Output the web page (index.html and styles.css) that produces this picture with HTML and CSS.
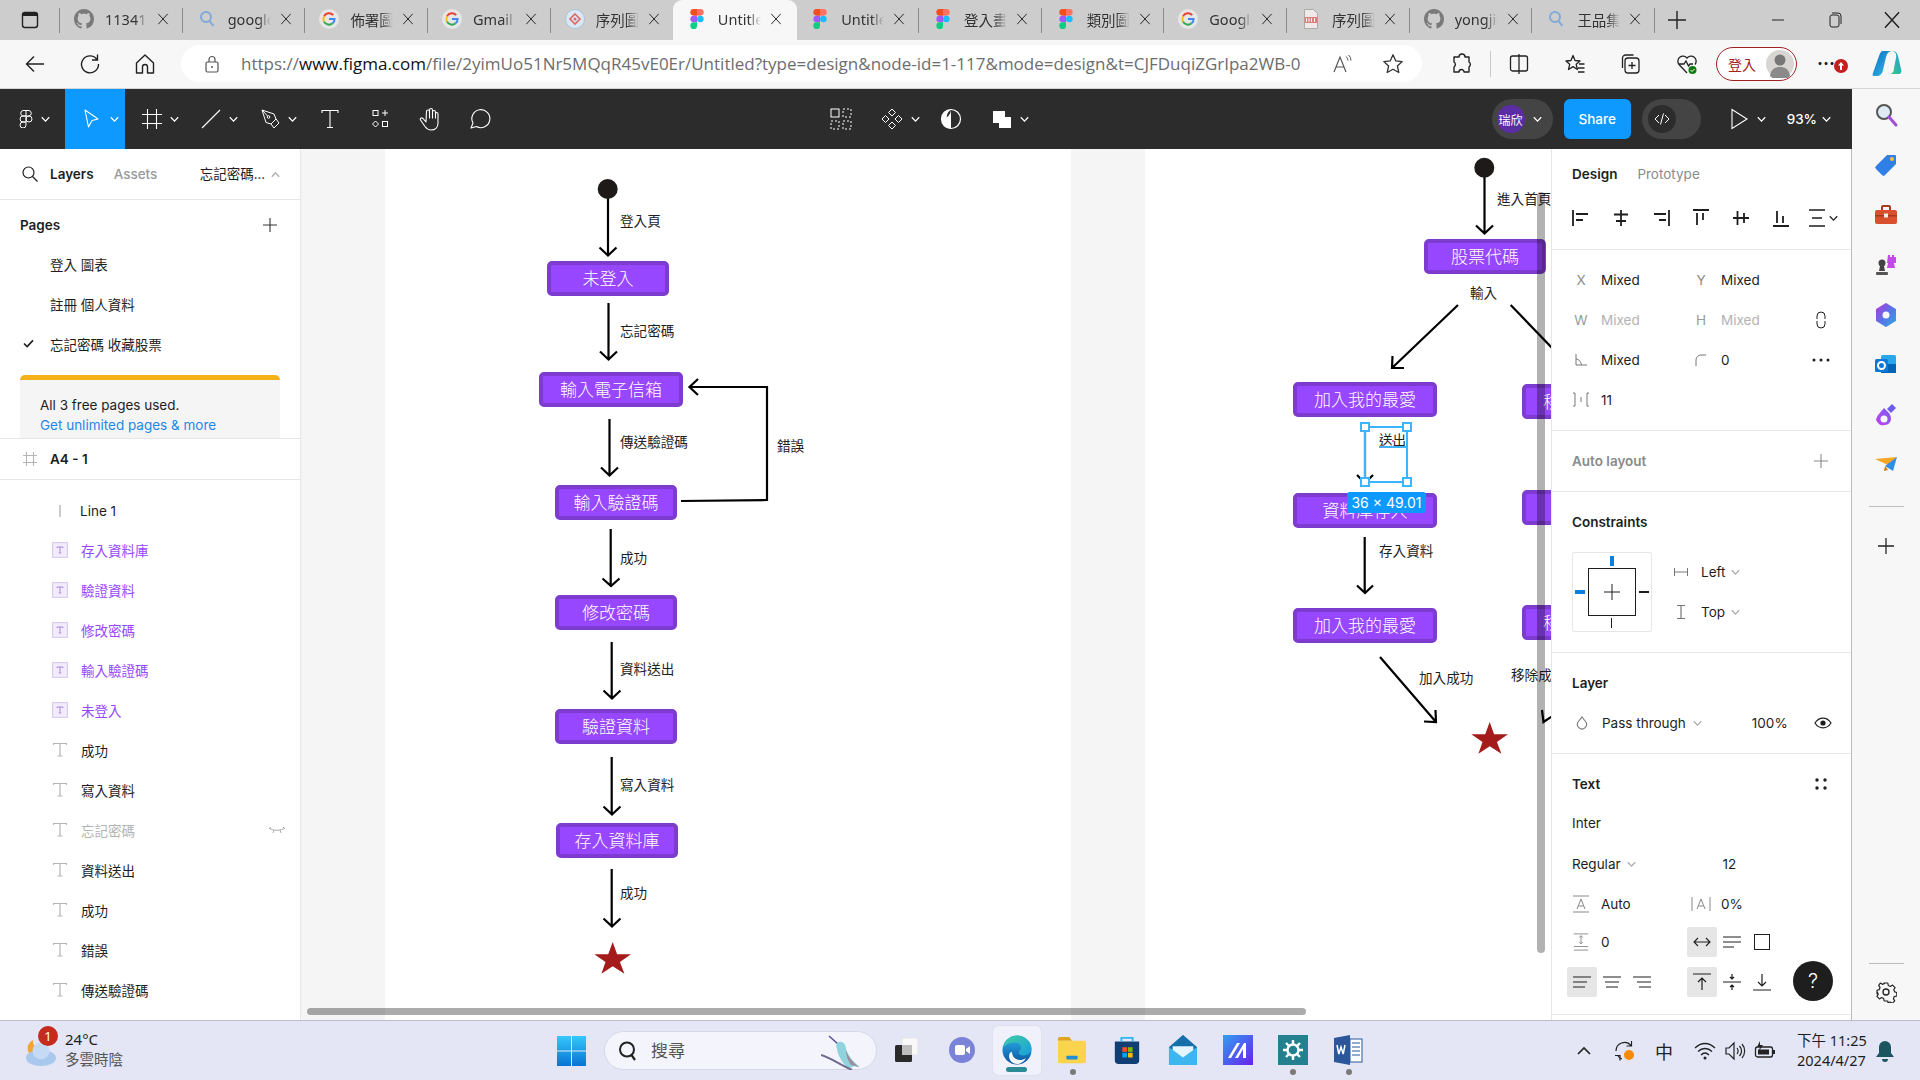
FILE: index.html
```html
<!DOCTYPE html>
<html lang="zh-Hant">
<head>
<meta charset="utf-8">
<title>Figma</title>
<link rel="stylesheet" href="styles.css">
</head>
<body>
<svg class="defs" aria-hidden="true">
  <symbol id="fig" viewBox="0 0 12 18"><path d="M3 0h3v6H3a3 3 0 010-6z" fill="#f24e1e"/><path d="M6 0h3a3 3 0 010 6H6z" fill="#ff7262"/><path d="M0 9a3 3 0 013-3h3v6H3a3 3 0 01-3-3z" fill="#a259ff"/><circle cx="9" cy="9" r="3" fill="#1abcfe"/><path d="M3 12h3v3a3 3 0 11-3-3z" fill="#0acf83"/></symbol>
  <symbol id="goog" viewBox="0 0 20 20"><circle cx="10" cy="10" r="10" fill="#e6e6e6"/><path d="M14.2 6.2A5.6 5.6 0 005 7.4" fill="none" stroke="#ea4335" stroke-width="2"/><path d="M5 7.4a5.6 5.6 0 000 5.2" fill="none" stroke="#fbbc05" stroke-width="2"/><path d="M5 12.6a5.6 5.6 0 008.6 1.7" fill="none" stroke="#34a853" stroke-width="2"/><path d="M13.6 14.3a5.4 5.4 0 002-4.4H10" fill="none" stroke="#4285f4" stroke-width="2"/></symbol>
  <symbol id="gh" viewBox="0 0 16 16"><path fill="#7a7a7a" d="M8 0C3.58 0 0 3.58 0 8c0 3.54 2.29 6.53 5.47 7.59.4.07.55-.17.55-.38 0-.19-.01-.82-.01-1.49-2.01.37-2.53-.49-2.69-.94-.09-.23-.48-.94-.82-1.13-.28-.15-.68-.52-.01-.53.63-.01 1.08.58 1.23.82.72 1.21 1.87.87 2.33.66.07-.52.28-.87.51-1.07-1.78-.2-3.64-.89-3.64-3.95 0-.87.31-1.59.82-2.15-.08-.2-.36-1.02.08-2.12 0 0 .67-.21 2.2.82.64-.18 1.32-.27 2-.27s1.36.09 2 .27c1.53-1.04 2.2-.82 2.2-.82.44 1.1.16 1.92.08 2.12.51.56.82 1.27.82 2.15 0 3.07-1.87 3.75-3.65 3.95.29.25.54.73.54 1.48 0 1.07-.01 1.93-.01 2.2 0 .21.15.46.55.38A8.01 8.01 0 0016 8c0-4.42-3.58-8-8-8z"/></symbol>
  <symbol id="mag" viewBox="0 0 20 20"><circle cx="9" cy="8" r="5" fill="none" stroke="#7fa9d8" stroke-width="2"/><path d="M12.5 12l4 5" stroke="#7fa9d8" stroke-width="2"/></symbol>
  <symbol id="seq" viewBox="0 0 20 20"><circle cx="10" cy="10" r="9.5" fill="#dbe7f2" stroke="#a9c3da"/><path d="M10 5l5 5-5 5-5-5z" fill="none" stroke="#d66" stroke-width="1.6"/><circle cx="10" cy="10" r="1.5" fill="#d66"/></symbol>
  <symbol id="pdf" viewBox="0 0 20 20"><path d="M3.5.5h9l4 4v15h-13z" fill="#efe9e9" stroke="#aaa"/><rect x="3.5" y="8" width="13" height="6" fill="#dc7f7f"/><path d="M5.5 9.2v3.6M8 9.2v3.6M10.5 9.2v3.6M13.5 9.2v3.6" stroke="#fff"/></symbol>
  <symbol id="x" viewBox="0 0 14 14"><path d="M1.5 1l11 12M12.5 1l-11 12" fill="none" stroke="#1e1e1e" stroke-width="1.1"/></symbol>
  <symbol id="chev" viewBox="0 0 8 6"><path d="M.7 1l3.3 3.4L7.3 1" fill="none" stroke="currentColor" stroke-width="1.1"/></symbol>
  <symbol id="t" viewBox="0 0 16 16"><path d="M1.5 3V1.5h13V3M8 1.5v12.5M5.5 14h5" fill="none" stroke="#b5b5b5" stroke-width="1.2"/></symbol>
  <symbol id="tbox" viewBox="0 0 16 16"><rect x=".6" y=".6" width="14.8" height="14.8" fill="#f3ecfd" stroke="#dccbf5" stroke-width="1.2"/><path d="M5 6V5h6v1M8 5v6M6.8 11h2.4" fill="none" stroke="#a78add"/></symbol>
  <symbol id="plus" viewBox="0 0 14 14"><path d="M7 0v14M0 7h14" stroke="currentColor" stroke-width="1.1" fill="none"/></symbol>
</svg>

<header class="tabbar">
  <div class="tab-lead"><svg class="i-20" viewBox="0 0 20 20"><rect x="2.5" y="2.5" width="15" height="15" rx="2.5" fill="none" stroke="#222" stroke-width="1.4"/><path d="M2.5 6h15V5a2.5 2.5 0 00-2.5-2.5H5A2.5 2.5 0 002.5 5z" fill="#222"/></svg></div>
  <div class="tab"><svg class="fav"><use href="#gh"/></svg><span class="tab-title">11341143</span><svg class="tab-x"><use href="#x"/></svg></div>
  <div class="tab"><svg class="fav"><use href="#mag"/></svg><span class="tab-title">google</span><svg class="tab-x"><use href="#x"/></svg></div>
  <div class="tab"><svg class="fav"><use href="#goog"/></svg><span class="tab-title">佈署圖</span><svg class="tab-x"><use href="#x"/></svg></div>
  <div class="tab"><svg class="fav"><use href="#goog"/></svg><span class="tab-title">Gmail</span><svg class="tab-x"><use href="#x"/></svg></div>
  <div class="tab no-sep"><svg class="fav"><use href="#seq"/></svg><span class="tab-title">序列圖</span><svg class="tab-x"><use href="#x"/></svg></div>
  <div class="tab active"><svg class="fav"><use href="#fig"/></svg><span class="tab-title">Untitled</span><svg class="tab-x"><use href="#x"/></svg></div>
  <div class="tab"><svg class="fav"><use href="#fig"/></svg><span class="tab-title">Untitled</span><svg class="tab-x"><use href="#x"/></svg></div>
  <div class="tab"><svg class="fav"><use href="#fig"/></svg><span class="tab-title">登入畫面</span><svg class="tab-x"><use href="#x"/></svg></div>
  <div class="tab"><svg class="fav"><use href="#fig"/></svg><span class="tab-title">類別圖</span><svg class="tab-x"><use href="#x"/></svg></div>
  <div class="tab"><svg class="fav"><use href="#goog"/></svg><span class="tab-title">Google</span><svg class="tab-x"><use href="#x"/></svg></div>
  <div class="tab"><svg class="fav"><use href="#pdf"/></svg><span class="tab-title">序列圖</span><svg class="tab-x"><use href="#x"/></svg></div>
  <div class="tab"><svg class="fav"><use href="#gh"/></svg><span class="tab-title">yongjin</span><svg class="tab-x"><use href="#x"/></svg></div>
  <div class="tab"><svg class="fav"><use href="#mag"/></svg><span class="tab-title">王品集團</span><svg class="tab-x"><use href="#x"/></svg></div>
  <div class="tab-new"><svg class="i-18"><use href="#plus"/></svg></div>
  <div class="win-btns">
    <span class="win-btn"><svg class="i-14" viewBox="0 0 14 14"><path d="M1 7h12" stroke="#222"/></svg></span>
    <span class="win-btn"><svg class="i-18" viewBox="0 0 18 18"><rect x="4" y="4" width="9" height="12" rx="2" fill="none" stroke="#222"/><path d="M6 2h6a3 3 0 013 3v8" fill="none" stroke="#222"/></svg></span>
    <span class="win-btn"><svg class="i-18"><use href="#x"/></svg></span>
  </div>
</header>

<nav class="addrbar">
  <span class="nav-btn"><svg class="i-22" viewBox="0 0 22 22"><path d="M20 11H3M10 3.5L2.5 11l7.5 7.5" fill="none" stroke="#222" stroke-width="1.4"/></svg></span>
  <span class="nav-btn"><svg class="i-22" viewBox="0 0 22 22"><path d="M18 6.5A8.5 8.5 0 1019.5 11M18.5 1.500v5.500h-5.500" fill="none" stroke="#222" stroke-width="1.4"/></svg></span>
  <span class="nav-btn"><svg class="i-22" viewBox="0 0 22 22"><path d="M2.5 10L11 2l8.5 8v10h-6v-6a2.5 2.5 0 00-5 0v6h-6z" fill="none" stroke="#222" stroke-width="1.4" stroke-linejoin="round"/></svg></span>
  <div class="url-pill">
    <svg class="i-18 lock" viewBox="0 0 18 18"><rect x="3" y="7" width="12" height="10" rx="1.5" fill="none" stroke="#555" stroke-width="1.2"/><path d="M6 7V4.5a3 3 0 016 0V7" fill="none" stroke="#555" stroke-width="1.2"/><circle cx="9" cy="12" r="1" fill="#555"/></svg>
    <span class="url"><span class="url-dim">https://</span>www.figma.com<span class="url-dim">/file/2yimUo51Nr5MQqR45vE0Er/Untitled?type=design&amp;node-id=1-117&amp;mode=design&amp;t=CJFDuqiZGrIpa2WB-0</span></span>
    <span class="url-tools">
      <svg class="i-22" viewBox="0 0 22 22"><path d="M2 19L8 4l6 15M4.5 14h7" fill="none" stroke="#555" stroke-width="1.2"/><path d="M14 3.5a5 5 0 012 4M16.5 2a7 7 0 012.5 5.5" fill="none" stroke="#555"/></svg>
      <svg class="i-22" viewBox="0 0 22 22"><path d="M11 1.800l2.800 6.100 6.400.7-4.800 4.400 1.400 6.500L11 16.200 5.200 19.500l1.400-6.500-4.800-4.400 6.400-.7z" fill="none" stroke="#333" stroke-width="1.3" stroke-linejoin="round"/></svg>
    </span>
  </div>
  <span class="ext-btn first"><svg class="i-22" viewBox="0 0 22 22"><path d="M8 4a3 3 0 016 0h4v5a3 3 0 010 5v5h-5a2.5 2.5 0 00-5 0H3v-5a3 3 0 000-5V4z" fill="none" stroke="#222" stroke-width="1.4" stroke-linejoin="round"/></svg></span>
  <span class="ext-sep"></span>
  <span class="ext-btn"><svg class="i-22" viewBox="0 0 22 22"><rect x="2.5" y="3" width="17" height="15" rx="2" fill="none" stroke="#222" stroke-width="1.3"/><path d="M11 1v20" stroke="#222" stroke-width="1.3"/></svg></span>
  <span class="ext-btn"><svg class="i-22" viewBox="0 0 22 22"><path d="M9 2.5l2 5 5 .5-3.800 3.300 1.200 5.200L9 13.600l-4.500 2.900 1.200-5.200L2 8l5-.5zM15 11h5.500M14 15h6.500M14 19h6.500" fill="none" stroke="#222" stroke-width="1.3" stroke-linejoin="round"/></svg></span>
  <span class="ext-btn"><svg class="i-22" viewBox="0 0 22 22"><rect x="5" y="5" width="14" height="15" rx="3" fill="none" stroke="#222" stroke-width="1.3"/><path d="M2.5 15V5a3 3 0 013-3h8M12 9v7M8.5 12.500h7" fill="none" stroke="#222" stroke-width="1.3"/></svg></span>
  <span class="ext-btn"><svg class="i-22" viewBox="0 0 22 22"><path d="M11 20L3 11.500A5 5 0 0111 5a5 5 0 018 6.500M3 11h5l2-3 2.500 5 1.500-2h3" fill="none" stroke="#222" stroke-width="1.3"/><circle cx="16.5" cy="17" r="4" fill="#107c10"/><path d="M14.5 17l1.500 1.500 2.500-2.500" fill="none" stroke="#fff"/></svg></span>
  <div class="login-pill"><span>登入</span><svg class="avatar-sm" viewBox="0 0 28 28"><circle cx="14" cy="14" r="14" fill="#d7d6d2"/><circle cx="14" cy="10" r="5.5" fill="#777"/><path d="M4 26c1-7 5-9 10-9s9 2 10 9a14 14 0 01-20 0z" fill="#8a8a8a"/></svg></div>
  <span class="more-btn"><span class="more-dots">···</span><span class="red-badge"><svg class="i-10" viewBox="0 0 10 10"><path d="M5 1l3 3.500H6v4.500H4V4.500H2z" fill="#fff"/></svg></span></span>
  <span class="copilot"><svg class="i-32" viewBox="0 0 32 32"><defs><linearGradient id="cpa" x1="0" y1="0" x2="1" y2="1"><stop offset="0" stop-color="#0f6cbd"/><stop offset="1" stop-color="#35c1f1"/></linearGradient><linearGradient id="cpb" x1="0" y1="1" x2="1" y2="0"><stop offset="0" stop-color="#3dcb7b"/><stop offset="1" stop-color="#1a9de0"/></linearGradient></defs><path d="M12 3h9c-3 0-5 2-6 6l-3 13c-1 4-3 6-6 6H3c-1 0-2-1-1-3l6-17c1-3 2-5 4-5z" fill="url(#cpa)"/><path d="M21 3c4 0 5 2 6 5l3 13c1 3 0 5-3 5h-9c3 0 5-2 5-6l2-10c1-4-1-7-4-7z" fill="url(#cpb)"/></svg></span>
</nav>

<div class="app">
  <div class="figma">
    <div class="toolbar">
      <div class="tool t-menu"><svg class="i-18" viewBox="0 0 12 18"><path d="M3 .5h6a2.800 2.800 0 010 5.500H3A2.800 2.800 0 013 .5zM3 6h3v6H3a3 3 0 010-6zM9 6a3 3 0 110 6 3 3 0 010-6zM3 12h3v3a3 3 0 11-3-3z" fill="none" stroke="#fff"/><path d="M6 .5V6" stroke="#fff"/></svg><svg class="chev"><use href="#chev"/></svg></div>
      <div class="tool t-move"><svg class="i-22" viewBox="0 0 22 22"><path d="M5 2l13 9-6 1.500L8.500 19z" fill="none" stroke="#fff" stroke-width="1.1" stroke-linejoin="round"/></svg><svg class="chev"><use href="#chev"/></svg></div>
      <div class="tool t-frame"><svg class="i-20" viewBox="0 0 20 20"><path d="M5.500 0v20M14.500 0v20M0 5.500h20M0 14.500h20" stroke="#fff" stroke-width="1.1"/></svg><svg class="chev"><use href="#chev"/></svg></div>
      <div class="tool t-line"><svg class="i-20" viewBox="0 0 20 20"><path d="M1 19L19 1" stroke="#fff" stroke-width="1.1"/></svg><svg class="chev"><use href="#chev"/></svg></div>
      <div class="tool t-pen"><svg class="i-20" viewBox="0 0 20 20"><path d="M2 1l12 4 2 5-5 5-5-1.500L2 1zM2 1l5.500 6M11 15l3 4 5-5-3-4" fill="none" stroke="#fff" stroke-linejoin="round"/><circle cx="8.500" cy="8" r="1.300" fill="none" stroke="#fff"/></svg><svg class="chev"><use href="#chev"/></svg></div>
      <div class="tool t-plain"><svg class="i-20" viewBox="0 0 20 20"><path d="M2 4V1.500h16V4M10 1.500v17M7 18.500h6" fill="none" stroke="#fff" stroke-width="1.1"/></svg></div>
      <div class="tool t-plain"><svg class="i-20" viewBox="0 0 20 20"><rect x="3" y="1.500" width="5" height="5" fill="none" stroke="#fff"/><path d="M15 1v6M12 4h6" stroke="#fff"/><path d="M5.500 12l3 3-3 3-3-3z" fill="none" stroke="#fff"/><rect x="12.500" y="12.500" width="5" height="5" fill="none" stroke="#fff"/></svg></div>
      <div class="tool t-plain"><svg class="i-24" viewBox="0 0 24 24"><path d="M8 15l-3-3.500c-1.500-1.500-3.500 0-2.500 1.500l4.500 6.500c1.500 2 3 3.500 6 3.500 4.500 0 7-3 7-7V7c0-2-2.500-2-2.500 0v4-6c0-2-3-2-3 0v6-8c0-2-3-2-3 0v8-6.500c0-2-3-2-3 0z" fill="none" stroke="#fff" stroke-width="1.1" stroke-linejoin="round"/></svg></div>
      <div class="tool t-plain"><svg class="i-24" viewBox="0 0 24 24"><path d="M3 21l2-5a9 9 0 113.500 3.500z" fill="none" stroke="#fff" stroke-width="1.1" stroke-linejoin="round"/></svg></div>
      <div class="tool t-grid"><svg class="i-22" viewBox="0 0 22 22"><rect x="1" y="1" width="8" height="8" fill="none" stroke="#fff"/><rect x="13" y="1" width="8" height="8" fill="none" stroke="#fff" stroke-dasharray="2 2"/><rect x="1" y="13" width="8" height="8" fill="none" stroke="#fff" stroke-dasharray="2 2"/><rect x="13" y="13" width="8" height="8" fill="none" stroke="#fff" stroke-dasharray="2 2"/></svg></div>
      <div class="tool t-comp"><svg class="i-22" viewBox="0 0 22 22"><path d="M11 1l3.500 3.500L11 8 7.500 4.500zM11 14l3.500 3.500L11 21l-3.500-3.500zM4.500 7.500L8 11l-3.500 3.500L1 11zM17.500 7.500L21 11l-3.500 3.500L14 11z" fill="none" stroke="#fff"/></svg><svg class="chev"><use href="#chev"/></svg></div>
      <div class="tool t-plain"><svg class="i-22" viewBox="0 0 22 22"><circle cx="11" cy="11" r="9.500" fill="none" stroke="#fff" stroke-width="1.2"/><path d="M11 1.500a9.500 9.500 0 000 19c-3-2-4.500-5-4.500-9.500S8 3.500 11 1.500z" fill="#fff"/><path d="M11 1.500A9.500 9.500 0 012 11a9.500 9.500 0 009 9.500z" fill="#fff"/></svg></div>
      <div class="tool t-bool"><svg class="i-20" viewBox="0 0 20 20"><rect x="1" y="2" width="12" height="12" fill="#fff"/><rect x="7" y="8" width="12" height="11" fill="#fff"/></svg><svg class="chev"><use href="#chev"/></svg></div>
      <div class="tool-right">
        <div class="avatar-pill"><span class="avatar">瑞欣</span><svg class="chev"><use href="#chev"/></svg></div>
        <button class="share">Share</button>
        <div class="code-toggle"><span class="knob"><svg class="i-18" viewBox="0 0 18 18"><path d="M6 5L2 9l4 4M12 5l4 4-4 4M10.500 3.500l-3 11" fill="none" stroke="#fff"/></svg></span></div>
        <div class="tool t-play"><svg class="i-22" viewBox="0 0 22 22"><path d="M4 1.500L19 11 4 20.500z" fill="none" stroke="#fff" stroke-width="1.1"/></svg><svg class="chev"><use href="#chev"/></svg></div>
        <div class="zoom-val"><span>93%</span><svg class="chev"><use href="#chev"/></svg></div>
      </div>
    </div>

    <div class="workspace">
      <aside class="left">
        <div class="left-head">
          <svg class="i-16 search" viewBox="0 0 16 16"><circle cx="6.500" cy="6.500" r="5.500" fill="none" stroke="#1e1e1e" stroke-width="1.2"/><path d="M10.500 10.500l5 5" stroke="#1e1e1e" stroke-width="1.2"/></svg>
          <span class="tab-on">Layers</span><span class="tab-off">Assets</span>
          <span class="page-pick">忘記密碼...</span><svg class="chev up"><use href="#chev"/></svg>
        </div>
        <div class="pages">
          <div class="pages-head"><span class="strong">Pages</span><svg class="i-14 add"><use href="#plus"/></svg></div>
          <div class="page-row">登入 圖表</div>
          <div class="page-row">註冊 個人資料</div>
          <div class="page-row current"><svg class="check" viewBox="0 0 12 10"><path d="M1 5l3.500 3.500L11 1.500" fill="none" stroke="#1e1e1e" stroke-width="1.8"/></svg>忘記密碼 收藏股票</div>
          <div class="upsell"><div>All 3 free pages used.</div><div class="link">Get unlimited pages &amp; more</div></div>
        </div>
        <div class="frame-row"><svg class="i-16" viewBox="0 0 16 16"><path d="M4.500 1v14M11.500 1v14M1 4.500h14M1 11.500h14" stroke="#b5b5b5" stroke-width="1.1"/></svg><span>A4 - 1</span></div>
        <div class="layers">
          <div class="layer"><svg class="i-16" viewBox="0 0 16 16"><path d="M8 2v12" stroke="#b5b5b5" stroke-width="1.4"/></svg><span class="line-name">Line 1</span></div>
          <div class="layer comp"><svg class="i-16"><use href="#tbox"/></svg><span>存入資料庫</span></div>
          <div class="layer comp"><svg class="i-16"><use href="#tbox"/></svg><span>驗證資料</span></div>
          <div class="layer comp"><svg class="i-16"><use href="#tbox"/></svg><span>修改密碼</span></div>
          <div class="layer comp"><svg class="i-16"><use href="#tbox"/></svg><span>輸入驗證碼</span></div>
          <div class="layer comp"><svg class="i-16"><use href="#tbox"/></svg><span>未登入</span></div>
          <div class="layer"><svg class="i-16"><use href="#t"/></svg><span>成功</span></div>
          <div class="layer"><svg class="i-16"><use href="#t"/></svg><span>寫入資料</span></div>
          <div class="layer hidden-layer"><svg class="i-16"><use href="#t"/></svg><span>忘記密碼</span><svg class="eye-closed" viewBox="0 0 18 8"><path d="M1 2c4 3 12 3 16 0M3 1l-2 2M15 1l2 2M6 4l-1 3M12 4l1 3" fill="none" stroke="#aaa"/></svg></div>
          <div class="layer"><svg class="i-16"><use href="#t"/></svg><span>資料送出</span></div>
          <div class="layer"><svg class="i-16"><use href="#t"/></svg><span>成功</span></div>
          <div class="layer"><svg class="i-16"><use href="#t"/></svg><span>錯誤</span></div>
          <div class="layer"><svg class="i-16"><use href="#t"/></svg><span>傳送驗證碼</span></div>
        </div>
      </aside>

      <main class="canvas">
        <div class="page-frame frame-a"></div>
        <div class="page-frame frame-b"></div>
        <svg class="wires" viewBox="301 149 1251 871">
          <g fill="none" stroke="#000" stroke-width="2.2" stroke-linejoin="miter">
            <path d="M608 197V255M599.500 247.500L608 255.500l8.500-8"/>
            <path d="M608.500 303V359M600 351.500l8.500 8 8.500-8"/>
            <path d="M609.500 419V475M601 467.500l8.500 8 8.500-8"/>
            <path d="M681 501l86-1V387H690M698 379l-8.500 8 8.500 8"/>
            <path d="M610.700 529V586M602.500 578.500l8.500 7.500 8.500-7.500"/>
            <path d="M611.700 642V698M603.500 690.500l8.500 8 8.500-8"/>
            <path d="M611.700 757V814M603.500 806.500l8.500 8 8.500-8"/>
            <path d="M611.700 869V926M603.500 918.500l8.500 8 8.500-8"/>
            <path d="M1484.500 176V233M1476 225.500l8.500 8 8.500-8"/>
            <path d="M1458 305L1392 368M1392.500 356l-.5 12h12"/>
            <path d="M1510.700 305L1556 352"/>
            <path d="M1365 426V482M1357 475l8 8 8-8"/>
            <path d="M1364.700 537V592M1357 585.500l8 7.500 8-7.500"/>
            <path d="M1380 657L1436 722M1424 721.500l12 .5-.5-12"/>
            <path d="M1542 710l1.500 12 12-8"/>
          </g>
          <circle cx="607.700" cy="189" r="10" fill="#1e1a1a"/>
          <circle cx="1484.300" cy="167.700" r="10" fill="#1e1a1a"/>
          <path d="M612.700 942l4.400 12.200h13.900l-11.100 7.700 4.500 11.800-11.700-7.500-11.300 7.500 4.100-11.800-11.200-7.700h13.900z" fill="#a31b1b"/>
          <path d="M1489.700 722l4.400 12.200H1508l-11.100 7.700 4.500 11.800-11.700-7.500-11.300 7.500 4.100-11.800-11.200-7.700h13.900z" fill="#a31b1b"/>
        </svg>

        <div class="node n1">未登入</div>
        <div class="node n2">輸入電子信箱</div>
        <div class="node n3">輸入驗證碼</div>
        <div class="node n4">修改密碼</div>
        <div class="node n5">驗證資料</div>
        <div class="node n6">存入資料庫</div>
        <div class="node n7">股票代碼</div>
        <div class="node n8">加入我的最愛</div>
        <div class="node n9">資料庫存入</div>
        <div class="node n10">加入我的最愛</div>
        <div class="node n11">移除我的最愛</div>
        <div class="node n12">資料庫移除</div>
        <div class="node n13">移除我的最愛</div>

        <span class="lbl l1">登入頁</span>
        <span class="lbl l2">忘記密碼</span>
        <span class="lbl l3">傳送驗證碼</span>
        <span class="lbl l4">錯誤</span>
        <span class="lbl l5">成功</span>
        <span class="lbl l6">資料送出</span>
        <span class="lbl l7">寫入資料</span>
        <span class="lbl l8">成功</span>
        <span class="lbl l9">進入首頁</span>
        <span class="lbl l10">輸入</span>
        <span class="lbl l11">送出</span>
        <span class="lbl l12">存入資料</span>
        <span class="lbl l13">加入成功</span>
        <span class="lbl l14">移除成功</span>

        <div class="sel"><i class="h tl"></i><i class="h tr"></i><i class="h bl"></i><i class="h br"></i></div>
        <div class="sel-under"></div>
        <div class="sel-dot"></div>
        <div class="size-pill">36 × 49.01</div>
        <div class="sb-v"></div>
        <div class="sb-h"></div>
      </main>

      <aside class="right">
        <div class="r-tabs"><span class="strong">Design</span><span class="tab-off">Prototype</span></div>
        <div class="r-align">
          <span class="cell"><svg class="i-18" viewBox="0 0 18 18"><path d="M1 1v16M4 5h12M4 11h7" stroke="#1e1e1e" stroke-width="1.8" fill="none"/></svg></span>
          <span class="cell"><svg class="i-18" viewBox="0 0 18 18"><path d="M9 1v16M2 5.500h14M4 12h10" stroke="#1e1e1e" stroke-width="1.8" fill="none"/></svg></span>
          <span class="cell"><svg class="i-18" viewBox="0 0 18 18"><path d="M17 1v16M2 5h12M7 11h7" stroke="#1e1e1e" stroke-width="1.8" fill="none"/></svg></span>
          <span class="cell"><svg class="i-18" viewBox="0 0 18 18"><path d="M1 1h16M5 4v12M11 4v7" stroke="#1e1e1e" stroke-width="1.8" fill="none"/></svg></span>
          <span class="cell"><svg class="i-18" viewBox="0 0 18 18"><path d="M1 9h16M5.500 2v14M12 4v10" stroke="#1e1e1e" stroke-width="1.8" fill="none"/></svg></span>
          <span class="cell"><svg class="i-18" viewBox="0 0 18 18"><path d="M1 17h16M5 2v12M11 7v7" stroke="#1e1e1e" stroke-width="1.8" fill="none"/></svg></span>
          <span class="cell dist"><svg class="i-18" viewBox="0 0 18 18"><path d="M1 1h16M1 17h16M4 9h10" stroke="#1e1e1e" stroke-width="1.4" fill="none"/></svg><svg class="chev dark"><use href="#chev"/></svg></span>
        </div>
        <div class="r-props">
          <div class="prop-row"><span class="pl">X</span><span class="pv">Mixed</span><span class="pl">Y</span><span class="pv">Mixed</span></div>
          <div class="prop-row muted"><span class="pl">W</span><span class="pv">Mixed</span><span class="pl">H</span><span class="pv">Mixed</span><span class="pl"><svg class="i-18" viewBox="0 0 18 18"><path d="M5 8V5a4 4 0 018 0v3M5 10v3a4 4 0 008 0v-3" fill="none" stroke="#1e1e1e"/></svg></span></div>
          <div class="prop-row"><span class="pl"><svg class="i-14" viewBox="0 0 14 14"><path d="M2 1v11h11M2 6c3 0 5 3 5.500 6" fill="none" stroke="#777"/></svg></span><span class="pv">Mixed</span><span class="pl"><svg class="i-14" viewBox="0 0 14 14"><path d="M2 13V7a5 5 0 015-5h5" fill="none" stroke="#777"/></svg></span><span class="pv">0</span><span class="pl"><svg class="i-20" viewBox="0 0 20 20"><circle cx="3" cy="10" r="1.500" fill="#1e1e1e"/><circle cx="10" cy="10" r="1.500" fill="#1e1e1e"/><circle cx="17" cy="10" r="1.500" fill="#1e1e1e"/></svg></span></div>
          <div class="prop-row"><span class="pl"><svg class="i-18" viewBox="0 0 18 18"><path d="M1 2h2v13H1M17 2h-2v13h2M9 6v5" fill="none" stroke="#777"/></svg></span><span class="pv">11</span></div>
        </div>
        <div class="r-auto"><span class="sect-muted">Auto layout</span><svg class="i-14 add-r muted-plus"><use href="#plus"/></svg></div>
        <div class="r-cons">
          <div class="sect-title">Constraints</div>
          <div class="cons-body">
            <div class="cons-box"><div class="cons-inner"><svg class="i-16" viewBox="0 0 16 16"><path d="M8 0v16M0 8h16" stroke="#1e1e1e"/></svg></div><i class="tick tick-t"></i><i class="tick tick-l"></i><i class="tick tick-r"></i><i class="tick tick-b"></i></div>
            <div class="cons-sel">
              <div class="cons-row"><svg class="i-14" viewBox="0 0 14 14"><path d="M.5 3v8M13.500 3v8M1 7h12" fill="none" stroke="#777"/></svg><span>Left</span><svg class="chev soft"><use href="#chev"/></svg></div>
              <div class="cons-row"><svg class="i-14" viewBox="0 0 14 14"><path d="M3 .5h8M3 13.500h8M7 1v12" fill="none" stroke="#777" stroke-width="1.2"/></svg><span>Top</span><svg class="chev soft"><use href="#chev"/></svg></div>
            </div>
          </div>
        </div>
        <div class="r-layer">
          <div class="sect-title">Layer</div>
          <div class="layer-prop"><span class="pl"><svg class="i-14" viewBox="0 0 14 14"><path d="M7 1l3.500 4.500a4.500 4.500 0 11-7 0z" fill="none" stroke="#777" stroke-width="1.1"/></svg></span><span>Pass through</span><svg class="chev soft"><use href="#chev"/></svg><span class="opacity">100%</span><svg class="i-18 eye" viewBox="0 0 18 12"><path d="M1 6c4-6.500 12-6.500 16 0-4 6.500-12 6.500-16 0z" fill="none" stroke="#1e1e1e" stroke-width="1.2"/><circle cx="9" cy="6" r="2.600" fill="#1e1e1e"/></svg></div>
        </div>
        <div class="r-text">
          <div class="text-head"><span class="strong">Text</span><svg class="i-14 dots4" viewBox="0 0 14 14"><circle cx="3" cy="3" r="1.700" fill="#1e1e1e"/><circle cx="11" cy="3" r="1.700" fill="#1e1e1e"/><circle cx="3" cy="11" r="1.700" fill="#1e1e1e"/><circle cx="11" cy="11" r="1.700" fill="#1e1e1e"/></svg></div>
          <div class="tx-font">Inter</div>
          <div class="tx-weight"><span>Regular</span><svg class="chev soft"><use href="#chev"/></svg><span class="tx-size">12</span></div>
          <div class="prop-row tx-metric"><span class="pl"><svg class="i-18" viewBox="0 0 18 18"><path d="M1 1h16M1 17h16M5 14l4-10 4 10M6.500 11h5" fill="none" stroke="#888"/></svg></span><span class="pv">Auto</span><span class="pl"><svg class="i-20" viewBox="0 0 20 18"><path d="M1 2v14M19 2v14M6 14l4-10 4 10M7.500 11h5" fill="none" stroke="#888"/></svg></span><span class="pv">0%</span></div>
          <div class="tx-row2"><span class="pl"><svg class="i-18" viewBox="0 0 18 20"><path d="M1 1h16M1 15h16M1 19h16M9 3v9M7 5l2-2 2 2M7 10l2 2 2-2" fill="none" stroke="#888"/></svg></span><span class="pv tx-para">0</span>
            <span class="opt on"><svg class="i-18" viewBox="0 0 18 10"><path d="M1 5h16M5 1L1 5l4 4M13 1l4 4-4 4" fill="none" stroke="#1e1e1e" stroke-width="1.1"/></svg></span>
            <span class="opt"><svg class="i-18" viewBox="0 0 18 12"><path d="M0 1h18M0 6h18M0 11h11" fill="none" stroke="#1e1e1e"/></svg></span>
            <span class="opt"><svg class="i-16" viewBox="0 0 16 16"><rect x=".5" y=".5" width="15" height="15" fill="none" stroke="#1e1e1e"/></svg></span>
          </div>
          <div class="tx-row3">
            <span class="opt on"><svg class="i-18" viewBox="0 0 18 12"><path d="M0 1h18M0 6h14M0 11h12" fill="none" stroke="#1e1e1e" stroke-width="1.1"/></svg></span>
            <span class="opt"><svg class="i-18" viewBox="0 0 18 12"><path d="M0 1h18M2 6h14M3 11h12" fill="none" stroke="#1e1e1e" stroke-width="1.1"/></svg></span>
            <span class="opt"><svg class="i-18" viewBox="0 0 18 12"><path d="M0 1h18M4 6h14M6 11h12" fill="none" stroke="#1e1e1e" stroke-width="1.1"/></svg></span>
            <span class="opt on v-gap"><svg class="i-18" viewBox="0 0 18 18"><path d="M0 1h18M9 17V5M5 9l4-4 4 4" fill="none" stroke="#1e1e1e" stroke-width="1.2"/></svg></span>
            <span class="opt"><svg class="i-18" viewBox="0 0 18 18"><path d="M0 9h18M9 1v5M7 4l2 2 2-2M9 17v-5M7 14l2-2 2 2" fill="none" stroke="#1e1e1e" stroke-width="1.2"/></svg></span>
            <span class="opt"><svg class="i-18" viewBox="0 0 18 18"><path d="M0 17h18M9 1v12M5 9l4 4 4-4" fill="none" stroke="#1e1e1e" stroke-width="1.2"/></svg></span>
          </div>
          <div class="help">?</div>
        </div>
      </aside>
    </div>
  </div>

  <aside class="edge-side">
    <span class="side-i"><svg class="i-26" viewBox="0 0 26 26"><circle cx="11" cy="10" r="7" fill="#dfeaf5" stroke="#555" stroke-width="2"/><path d="M16 15l7 8" stroke="#a24fd6" stroke-width="3" stroke-linecap="round"/></svg></span>
    <span class="side-i"><svg class="i-24" viewBox="0 0 24 24"><path d="M13 2h8a1 1 0 011 1v8L11 22a2 2 0 01-3 0L2 16a2 2 0 010-3z" fill="#2f7fe6"/><circle cx="18" cy="6" r="2" fill="#f5c33b"/></svg></span>
    <span class="side-i"><svg class="i-24" viewBox="0 0 24 24"><rect x="1" y="7" width="22" height="14" rx="2" fill="#d9502e"/><path d="M8 7V4a1 1 0 011-1h6a1 1 0 011 1v3" fill="none" stroke="#a83a20" stroke-width="2"/><rect x="1" y="12" width="22" height="1.500" fill="#a83a20"/><rect x="10" y="10.500" width="4" height="4" fill="#eee"/></svg></span>
    <span class="side-i"><svg class="i-24" viewBox="0 0 24 24"><circle cx="8" cy="10" r="3.500" fill="#444"/><path d="M6 13h4l1 5H5z" fill="#444"/><rect x="2" y="19" width="12" height="3" rx="1" fill="#555"/><path d="M14 2h2v2h2V2h2v2h2V2v8h-2l1 5h-8l1-5h-1z" fill="#c24be8"/></svg></span>
    <span class="side-i"><svg class="i-24" viewBox="0 0 24 24"><defs><linearGradient id="m3" x1="0" y1="0" x2="1" y2="1"><stop offset="0" stop-color="#b03ad8"/><stop offset=".5" stop-color="#5a72e8"/><stop offset="1" stop-color="#2ea8e0"/></linearGradient></defs><path d="M12 1l9 5.500v11L12 23l-9-5.500v-11z" fill="url(#m3)" stroke="url(#m3)" stroke-width="2" stroke-linejoin="round"/><circle cx="12" cy="12" r="3.500" fill="#f7f7f7"/></svg></span>
    <span class="side-i"><svg class="i-24" viewBox="0 0 24 24"><rect x="7" y="2" width="15" height="18" rx="1.500" fill="#28a8ea"/><rect x="7" y="11" width="15" height="9" fill="#0364b8"/><rect x="1" y="6" width="13" height="13" rx="1.500" fill="#0f78d4"/><circle cx="7.500" cy="12.500" r="3.500" fill="none" stroke="#fff" stroke-width="2"/></svg></span>
    <span class="side-i"><svg class="i-24" viewBox="0 0 24 24"><defs><linearGradient id="dsg" x1="0" y1="1" x2="1" y2="0"><stop offset="0" stop-color="#c043f0"/><stop offset="1" stop-color="#7b5bf0"/></linearGradient></defs><path d="M2 17c1-5 5-8 8-12l4 4c2 2 3 4 3 7a6 6 0 01-6 6c-3 0-5 2-9-5z" fill="url(#dsg)"/><circle cx="10" cy="16" r="3.500" fill="#f7f7f7"/><path d="M18 1l4 4-5 5-4-4z" fill="#6d5cf0"/></svg></span>
    <span class="side-i"><svg class="i-24" viewBox="0 0 24 24"><path d="M1 6l22-2-9 8z" fill="#f5a623"/><path d="M23 4l-4 14-8-5z" fill="#2f8fe6"/><path d="M11 13l3 4-4 1z" fill="#c97a10"/></svg></span>
    <span class="side-rule"></span>
    <span class="side-plus"><svg class="i-16"><use href="#plus"/></svg></span>
    <span class="side-rule bottom"></span>
    <span class="side-gear"><svg class="i-22" viewBox="0 0 22 22"><path d="M9 1h4l.6 2.800 2.300 1 2.400-1.500 2.800 2.800-1.500 2.400 1 2.300 2.400.7v4l-2.800.6-1 2.300 1.500 2.400-2.800 2.800-2.400-1.500-2.300 1L13 21H9l-.6-2.800-2.300-1-2.400 1.500-2.800-2.800 1.500-2.400-1-2.300L1 13V9l2.400-.6 1-2.300-1.500-2.400L4.700 1l2.400 1.500 2.300-1z" transform="translate(1.100 1.100) scale(.9)" fill="none" stroke="#222" stroke-width="1.3" stroke-linejoin="round"/><circle cx="11" cy="11" r="3" fill="none" stroke="#222" stroke-width="1.3"/></svg></span>
  </aside>
</div>

<footer class="taskbar">
  <div class="weather">
    <div class="weather-icon"><svg class="i-34" viewBox="0 0 34 34"><path d="M9 6a9 9 0 008 10l-12 3A9 9 0 019 6z" fill="#f2a530"/><ellipse cx="17" cy="24" rx="15" ry="8" fill="#a9c8ee"/><circle cx="17" cy="17" r="8.500" fill="#c4daf5"/></svg><span class="w-badge">1</span></div>
    <div class="w-text"><div>24°C</div><div class="w-sub">多雲時陰</div></div>
  </div>
  <svg class="winlogo" viewBox="0 0 29 30"><defs><linearGradient id="wl" x1="0" y1="0" x2="0" y2="1"><stop offset="0" stop-color="#35c8fb"/><stop offset="1" stop-color="#0773d4"/></linearGradient></defs><path d="M0 0h14v14.500H0zM15 0h14v14.500H15zM0 15.500h14V30H0zM15 15.500h14V30H15z" fill="url(#wl)"/></svg>
  <div class="search-pill">
    <svg class="i-20" viewBox="0 0 20 20"><circle cx="9" cy="8.500" r="7" fill="none" stroke="#222" stroke-width="2"/><path d="M13.500 14l3.500 5" stroke="#222" stroke-width="2.2"/></svg>
    <span class="search-word">搜尋</span>
    <svg class="bird" viewBox="0 0 46 36"><path d="M8 2l9 8" stroke="#5a4a9a" stroke-width="1.5"/><path d="M16 9c4-3 9 0 9 6 2 6 6 12 14 18l-6-1-5 3c-5-4-11-12-12-20-1-2-1-4 0-6z" fill="#8fd3dc"/><path d="M25 16c2 6 6 12 13 17l-8-2c-3-4-5-9-5-15z" fill="#9a8f9e"/><path d="M0 21c8 2 20 10 31 15" fill="none" stroke="#6e6a8e" stroke-width="2"/></svg>
  </div>
  <span class="tb-app first-app"><svg class="i-26" viewBox="0 0 26 26"><rect x="8" y="1" width="16" height="17" rx="1.500" fill="#f8f8f8" stroke="#e3e3e3"/><rect x="1" y="8" width="17" height="17" rx="1.500" fill="#2a2a2a"/><rect x="8" y="8" width="10" height="10" fill="#bdbdbd"/></svg></span>
  <span class="tb-app"><svg class="i-28" viewBox="0 0 28 28"><circle cx="14" cy="14" r="13" fill="#7b83d8"/><path d="M5 23l1-5 6 3z" fill="#7b83d8"/><rect x="7" y="9" width="10" height="10" rx="2" fill="#fff"/><path d="M18 13l4-3v8l-4-3z" fill="#fff"/></svg></span>
  <span class="tb-app on-app"><svg class="i-30" viewBox="0 0 30 30"><defs><linearGradient id="eg" x1="0" y1="0" x2="1" y2="1"><stop offset="0" stop-color="#3fd0a0"/><stop offset="1" stop-color="#1a9de0"/></linearGradient><linearGradient id="eb" x1="0" y1="0" x2="0" y2="1"><stop offset="0" stop-color="#2bb6ee"/><stop offset="1" stop-color="#0b4f9c"/></linearGradient></defs><circle cx="15" cy="15" r="14.500" fill="url(#eb)"/><path d="M1 13C3 4 10 .5 15 .5c8 0 14.500 6 14.500 13 0 4-3.500 7-8 7-3 0-4.500-1-4.500-3 0-2 2-2.500 2-5 0-3-3-5-6-5-5 0-10 2-12 5.500z" fill="url(#eg)"/><path d="M10 17c0 5 4 8 8 8 2 0 4-.5 6-2-2 4-6 6-9 6-5 0-8-4-8-8 0-2 1-4 3-4z" fill="#f0f6fc"/></svg><i class="pill-ind"></i></span>
  <span class="tb-app"><svg class="i-30" viewBox="0 0 30 32"><path d="M0 4a2 2 0 012-2h10l3 4H0z" fill="#e0a51c"/><rect y="6" width="30" height="24" rx="1.500" fill="#fcd34d"/><rect x="9" y="22" width="12" height="4" rx="1" fill="#1d8fd8"/></svg><i class="dot-ind"></i></span>
  <span class="tb-app"><svg class="i-30" viewBox="0 0 30 32"><path d="M2 7h26v20a4 4 0 01-4 4H6a4 4 0 01-4-4z" fill="#123f73"/><path d="M9 7V3h12v4" fill="none" stroke="#2fb5ef" stroke-width="2"/><rect x="10" y="13" width="5" height="5" fill="#f25022"/><rect x="16" y="13" width="5" height="5" fill="#7fba00"/><rect x="10" y="19" width="5" height="5" fill="#00a4ef"/><rect x="16" y="19" width="5" height="5" fill="#ffb900"/></svg></span>
  <span class="tb-app"><svg class="i-30" viewBox="0 0 30 32"><path d="M0 13L15 0l15 13v19H0z" fill="#3db5ee"/><path d="M0 13L15 0l15 13-15 10z" fill="#156fa9"/><path d="M4 12h22v4l-11 8-11-8z" fill="#e4f5fd"/></svg></span>
  <span class="tb-app"><svg class="i-30" viewBox="0 0 30 30"><defs><linearGradient id="sk" x1="0" y1="0" x2="1" y2="1"><stop offset="0" stop-color="#30a0f0"/><stop offset="1" stop-color="#6a20f0"/></linearGradient></defs><rect width="30" height="30" fill="url(#sk)"/><path d="M5 23L14 8h3L8 23zM12 23L21 8h2v15h-3v-9l-5 9z" fill="#fff"/></svg></span>
  <span class="tb-app"><svg class="i-30" viewBox="0 0 30 30"><rect width="30" height="30" fill="#23808f"/><circle cx="15" cy="15" r="5.500" fill="none" stroke="#fff" stroke-width="2.4"/><path d="M15 5v4M15 21v4M5 15h4M21 15h4M8 8l3 3M19 19l3 3M22 8l-3 3M11 19l-3 3" stroke="#fff" stroke-width="2.4"/></svg><i class="dot-ind"></i></span>
  <span class="tb-app"><svg class="i-30" viewBox="0 0 30 30"><path d="M1 3l16-3v30L1 27z" fill="#2b579a"/><rect x="17" y="4" width="12" height="23" fill="#fff" stroke="#2b579a"/><path d="M19 8h8M19 12h8M19 16h8M19 20h8" stroke="#2b579a"/><path d="M4 10l1.800 9 2.200-7 2.200 7 1.800-9" fill="none" stroke="#fff" stroke-width="1.5"/></svg><i class="dot-ind"></i></span>
  <div class="tray">
    <span class="tray-i w-up"><svg class="i-16" viewBox="0 0 16 16"><path d="M2 11l6-6 6 6" fill="none" stroke="#222" stroke-width="1.6"/></svg></span>
    <span class="tray-i w-sync"><svg class="i-24" viewBox="0 0 24 24"><path d="M3 12a8.500 8.500 0 0115-5.500M18.500 2v5h-5M5 17a8.500 8.500 0 004 3M2 16.500h5v5" fill="none" stroke="#222" stroke-width="1.2"/><circle cx="16" cy="16" r="5" fill="#f58a07"/></svg></span>
    <span class="tray-i w-ime">中</span>
    <span class="tray-i w-wifi"><svg class="i-22" viewBox="0 0 22 18"><path d="M1 6c6-6 14-6 20 0M4 9.500c4-4 10-4 14 0M7 13c2.500-2.500 5.500-2.500 8 0" fill="none" stroke="#222" stroke-width="1.3"/><circle cx="11" cy="16" r="1.500" fill="#222"/></svg></span>
    <span class="tray-i w-vol"><svg class="i-22" viewBox="0 0 22 22"><path d="M2 8h3l5-5v16l-5-5H2z" fill="none" stroke="#222" stroke-width="1.2"/><path d="M13 8c1.500 2 1.500 4 0 6M15.500 6c2.500 3 2.500 7 0 10M18 4c3.500 4 3.500 10 0 14" fill="none" stroke="#222" stroke-width="1.2"/></svg></span>
    <span class="tray-i w-batt"><svg class="i-22" viewBox="0 0 22 22"><rect x="1.500" y="7" width="17" height="10" rx="2" fill="none" stroke="#222" stroke-width="1.3"/><rect x="4" y="9.500" width="11" height="5" fill="#222"/><rect x="19" y="10" width="2" height="4" fill="#222"/><path d="M6 1L3 7h3l-1 4 4-6H6z" fill="#222"/></svg></span>
    <div class="clock"><div>下午 11:25</div><div>2024/4/27</div></div>
    <span class="tray-i w-bell"><svg class="i-22" viewBox="0 0 22 22"><path d="M11 1a6 6 0 016 6v6l3 4H2l3-4V7a6 6 0 016-6z" fill="#1b5560"/><path d="M8 19h6a3 3 0 01-6 0z" fill="#1b5560"/></svg></span>
  </div>
</footer>
</body>
</html>
```
FILE: styles.css
```css
*{box-sizing:border-box}
html,body{margin:0;padding:0;width:1920px;height:1080px;overflow:hidden}
body{display:flex;flex-direction:column;font-family:Inter,"Noto Sans CJK TC",sans-serif;font-size:13.5px;color:#1e1e1e;background:#fff}
svg{display:block;flex:none}
.defs{position:absolute;width:0;height:0}
.i-10{width:10px;height:10px}.i-14{width:14px;height:14px}.i-16{width:16px;height:16px}.i-18{width:18px;height:18px}
.i-20{width:20px;height:20px}.i-22{width:22px;height:22px}.i-24{width:24px;height:24px}.i-26{width:26px;height:26px}
.i-28{width:28px;height:28px}.i-30{width:30px;height:30px}.i-32{width:32px;height:32px}.i-34{width:34px;height:34px}
.chev{width:9px;height:7px;color:#fff}
.chev.soft{color:#aaa}
.chev.dark{color:#1e1e1e}
.strong{font-weight:600}

/* browser tabs */
.tabbar{height:40px;flex:none;background:#cdcdcd;display:flex;font-family:"Noto Sans","Noto Sans CJK TC",sans-serif;font-size:14.5px;color:#333}
.tab-lead{width:60px;display:flex;align-items:center;justify-content:center;position:relative;padding-right:1px}
.tab-lead::after,.tab::after{content:"";position:absolute;right:0;top:8px;height:25px;width:1px;background:#8b8b8b}
.tab{flex:0 0 122.7px;position:relative;display:flex;align-items:center;padding:0 0 2px 14px;overflow:hidden}
.tab.no-sep::after,.tab.active::after{display:none}
.tab.active{background:#f7f7f7;border-radius:9px 9px 0 0;flex-basis:124px;margin-left:-.6px;margin-right:-.6px}
.fav{width:20px;height:20px;margin-right:11px}
.tab-title{width:43px;white-space:nowrap;overflow:hidden;-webkit-mask-image:linear-gradient(90deg,#000 70%,transparent 100%);mask-image:linear-gradient(90deg,#000 70%,transparent 100%)}
.tab-x{width:12px;height:12px;margin-left:9px}
.tab-new{width:44px;display:flex;align-items:center;justify-content:center;color:#222}
.win-btns{margin-left:auto;display:flex;align-items:center}
.win-btn{width:57px;display:flex;justify-content:center}

/* address bar */
.addrbar{height:49px;flex:none;background:#f7f7f7;display:flex;align-items:center;padding-left:7.5px;border-bottom:1px solid #d5d5d5;padding-bottom:1px}
.nav-btn{width:55px;display:flex;justify-content:center}
.url-pill{margin-left:8.5px;width:1241px;height:37px;background:#fff;border-radius:19px;display:flex;align-items:center;padding-left:22px;flex:none}
.lock{margin-right:20px}
.url{font-family:"Open Sans",sans-serif;font-size:17px;color:#111;white-space:nowrap;width:1063px;overflow:hidden}
.url-dim{color:#6d6d6d}
.url-tools{display:flex;gap:28px;margin-left:28px}
.ext-btn{width:56px;display:flex;justify-content:center}
.ext-btn.first{margin-left:12px}
.ext-sep{width:1px;height:26px;background:#c8c8c8}
.login-pill{width:81px;height:34px;margin-left:1px;border:1.5px solid #a32020;border-radius:17px;display:flex;align-items:center;justify-content:space-between;padding:0 2px 0 11px;font-family:"Noto Sans CJK TC",sans-serif;font-size:14px;color:#a32020;background:#fff}
.avatar-sm{width:28px;height:28px}
.more-btn{width:62px;position:relative;display:flex;justify-content:center;font-size:18px;font-weight:700;line-height:20px}
.more-dots{position:relative;left:-2px}
.red-badge{position:absolute;left:37px;top:5px;width:14px;height:14px;background:#c41e1e;border-radius:50%;display:flex;align-items:center;justify-content:center}
.copilot{width:56px;display:flex;justify-content:center}

/* app */
.app{flex:1;display:flex;min-height:0}
.figma{width:1852px;display:flex;flex-direction:column;flex:none}
.toolbar{height:60px;flex:none;background:#2c2c2c;display:flex;color:#fff}
.tool{height:60px;display:flex;align-items:center;flex:none}
.t-menu{width:65px;padding-left:17px;gap:6px}
.t-move{width:60px;background:#0d99ff;padding-left:15px;gap:8px}
.t-frame{width:60px;padding-left:17px;gap:8px}
.t-line{width:59px;padding-left:16px;gap:8px}
.t-pen{width:61px;padding-left:16px;gap:8px}
.t-plain{width:50px;justify-content:center}
.t-grid{width:50px;justify-content:center;margin-left:311px}
.t-comp{width:60px;padding-left:15px;gap:8px}
.t-bool{width:64px;padding-left:16px;gap:8px}
.tool-right{margin-left:auto;display:flex;align-items:center;padding-right:21px}
.avatar-pill{width:61px;height:40px;background:#444;border-radius:20px;display:flex;align-items:center;gap:8px;padding-left:5px}
.avatar{width:28px;height:28px;border-radius:50%;background:#5a2da5;color:#fff;font-family:"Noto Sans CJK TC",sans-serif;font-size:12px;display:flex;align-items:center;justify-content:center;white-space:nowrap}
.share{width:67px;height:40px;margin-left:11px;background:#0d99ff;color:#fff;border:0;border-radius:6px;font:500 13.5px Inter,sans-serif}
.code-toggle{width:59px;height:40px;margin-left:11px;background:#444;border-radius:20px;display:flex;align-items:center;padding-left:6px}
.knob{width:28px;height:28px;border-radius:50%;background:#2c2c2c;display:flex;align-items:center;justify-content:center}
.t-play{margin-left:27px;gap:7px}
.zoom-val{display:flex;align-items:center;gap:5px;margin-left:21px;font-size:13.5px;font-weight:500}

.workspace{flex:1;display:flex;min-height:0}

/* left panel */
.left{width:301px;flex:none;background:#fff;border-right:1px solid #e6e6e6;display:flex;flex-direction:column;overflow:hidden}
.left-head{height:51px;flex:none;display:flex;align-items:center;padding-left:22px;border-bottom:1px solid #e6e6e6}
.left-head .search{margin-right:12px}
.tab-on{font-weight:600}
.tab-off{color:#999;font-weight:500;margin-left:20px}
.page-pick{margin-left:auto;font-family:"Noto Sans CJK TC",sans-serif;font-size:13.5px;padding-bottom:2px}
.chev.up{transform:rotate(180deg);color:#aaa;margin:0 20px 0 6px}
.pages{height:239px;flex:none;padding:0 20px;overflow:hidden;border-bottom:1px solid #e6e6e6}
.pages-head{height:50px;display:flex;align-items:center;justify-content:space-between}
.add{margin-right:3px;color:#333}
.page-row{height:40px;display:flex;align-items:center;padding:0 0 2px 30px;position:relative}
.pages-head+.page-row{margin-top:-5px}
.check{position:absolute;left:3px;top:14px;width:11px;height:9px}
.upsell{margin-top:10px;height:70px;background:#f5f5f5;border-top:5px solid #f5b118;border-radius:5px 5px 0 0;padding:15px 20px;line-height:20px;color:#1e1e1e;font-size:13.5px}
.link{color:#1f87e8}
.frame-row{height:41px;flex:none;display:flex;align-items:center;gap:12px;padding-left:22px;font-weight:600;border-bottom:1px solid #e6e6e6}
.layers{flex:1;padding-top:11px;overflow:hidden}
.layer{height:40px;display:flex;align-items:center;padding-left:52px;gap:13px;white-space:nowrap}
.layer+.layer{padding-bottom:2px}
.line-name{margin-left:-1px}
.layer.comp{color:#9747ff}
.hidden-layer{color:#b3b3b3}
.eye-closed{width:18px;height:8px;margin-left:auto;margin-right:14px}

/* canvas */
.canvas{flex:1;position:relative;background:#f5f5f5;overflow:hidden;min-width:0}
.page-frame{position:absolute;top:0;bottom:0;background:#fff}
.frame-a{left:84px;width:686px}
.frame-b{left:844px;right:0}
.wires{position:absolute;left:0;top:0;width:1251px;height:871px}
.node{position:absolute;height:35px;width:122px;background:#9747ff;border:4.5px solid #7d3ccf;border-radius:5px;color:#fff;font-family:"Noto Sans CJK TC",sans-serif;font-size:17px;font-weight:300;line-height:25px;text-align:center;white-space:nowrap;overflow:hidden}
.n2,.n8,.n9,.n10,.n11,.n12,.n13{width:144px}
.n1{left:246px;top:112px}
.n2{left:238px;top:223px}
.n3{left:254px;top:336px}
.n4{left:254px;top:446px}
.n5{left:254px;top:560px}
.n6{left:255px;top:674px}
.n7{left:1123px;top:90px}
.n8{left:992px;top:233px}
.n9{left:992px;top:344px}
.n10{left:992px;top:459px}
.n11{left:1221px;top:235px}
.n12{left:1221px;top:341px}
.n13{left:1221px;top:456px}
.lbl{position:absolute;font-family:"Noto Sans CJK TC",sans-serif;font-size:13.6px;line-height:20px;color:#1e1e1e;white-space:nowrap}
.l1{left:319px;top:61px}
.l2{left:319px;top:171px}
.l3{left:319px;top:282px}
.l4{left:476px;top:286px}
.l5{left:319px;top:398px}
.l6{left:319px;top:509px}
.l7{left:319px;top:625px}
.l8{left:319px;top:733px}
.l9{left:1196px;top:39px}
.l10{left:1169px;top:133px}
.l11{left:1078px;top:280px}
.l12{left:1078px;top:391px}
.l13{left:1118px;top:518px}
.l14{left:1210px;top:515px}
.sel{position:absolute;left:1063px;top:277px;width:44px;height:57px;border:2px solid #3db4ff}
.h{position:absolute;width:10px;height:10px;background:#fff;border:2px solid #3db4ff}
.tl{left:-6px;top:-6px}.tr{right:-6px;top:-6px}.bl{left:-6px;bottom:-6px}.br{right:-6px;bottom:-6px}
.sel-under{position:absolute;left:1078px;top:297px;width:28px;height:1.5px;background:#3db4ff}
.sel-dot{position:absolute;left:1091px;top:291px;width:2px;height:2px;border-radius:50%;background:#ff3ea5}
.size-pill{position:absolute;left:1046px;top:343px;width:79px;height:21px;background:#0d99ff;color:#fff;border-radius:3px;font-size:14px;line-height:21px;text-align:center;white-space:nowrap}
.sb-v{position:absolute;left:1236px;top:43px;width:8px;height:761px;background:rgba(0,0,0,.3);border-radius:4px}
.sb-h{position:absolute;left:6px;top:859px;width:999px;height:7px;background:rgba(0,0,0,.33);border-radius:4px}

/* right panel */
.right{width:301px;flex:none;background:#fff;border-left:1px solid #e6e6e6;position:relative;overflow:hidden;display:flex;flex-direction:column;border-right:1px solid #bbb}
.r-tabs{height:50px;flex:none;display:flex;align-items:center;padding-left:20px}
.r-tabs .tab-off{margin-left:20px;font-weight:400;color:#8a8a8a}
.r-align{height:51px;flex:none;display:flex;padding:0 0 12px 9px;align-items:center;border-bottom:1px solid #e6e6e6}
.cell{width:40px;flex:none;display:flex;justify-content:center}
.dist{width:50px;justify-content:flex-start;align-items:center;gap:3px;padding-left:7px}
.r-props{height:181px;flex:none;padding:10px 0 0 9px;border-bottom:1px solid #e6e6e6}
.prop-row{height:40px;display:grid;grid-template-columns:40px 80px 40px 80px 40px;align-items:center}
.pl{display:flex;justify-content:center;color:#8a8a8a}
.pv{white-space:nowrap}
.prop-row.muted .pv{color:#b3b3b3}
.prop-row.muted .pl:nth-child(-n+3){color:#9a9a9a}
.r-auto{height:61px;flex:none;display:flex;align-items:center;justify-content:space-between;padding:0 23px 0 20px;border-bottom:1px solid #e6e6e6}
.sect-muted{color:#8a8a8a;font-weight:600}
.muted-plus{color:#8a8a8a}
.r-cons{height:161px;flex:none;padding:20px 20px 0;border-bottom:1px solid #e6e6e6}
.sect-title{font-weight:600;line-height:20px}
.cons-body{display:flex;margin-top:20px}
.cons-box{width:80px;height:80px;border:1px solid #e6e6e6;border-radius:2px;position:relative;display:flex;align-items:center;justify-content:center}
.cons-inner{width:48px;height:48px;border:1px solid #1e1e1e;display:flex;align-items:center;justify-content:center}
.tick{position:absolute;background:#1e1e1e}
.tick-t{left:37px;top:3px;width:4px;height:10px;background:#0c80e0}
.tick-l{left:2px;top:37px;width:10px;height:4px;background:#0c80e0}
.tick-r{right:2px;top:38px;width:10px;height:2px}
.tick-b{left:38px;bottom:3px;width:1px;height:10px}
.cons-sel{margin-left:22px}
.cons-row{height:40px;display:flex;align-items:center;gap:6px}
.cons-row svg:first-child{margin-right:7px}
.r-layer{height:101px;flex:none;padding:20px 20px 0;border-bottom:1px solid #e6e6e6}
.layer-prop{display:flex;align-items:center;height:40px;margin:10px 0 0 -11px;white-space:nowrap}
.layer-prop .pl{width:41px;flex:none}
.layer-prop .chev{margin-left:7px}
.opacity{margin-left:50px}
.eye{margin-left:26px;height:12px}
.r-text{height:261px;flex:none;border-bottom:1px solid #e6e6e6;position:relative}
.text-head{height:60px;display:flex;align-items:center;justify-content:space-between;padding:0 23px 0 20px}
.tx-font{padding-left:20px;height:20px;line-height:20px;margin-top:-1px}
.tx-weight{display:flex;align-items:center;height:40px;margin-top:11px;padding-left:20px}
.tx-weight .chev{margin-left:6px}
.tx-size{margin-left:87px}
.tx-metric{padding-left:9px}
.tx-row2{display:flex;align-items:center;height:38px;padding-left:9px;margin-top:-1px}
.tx-row2 .pl{width:40px}
.tx-para{width:86px}
.opt{width:30px;height:30px;display:flex;align-items:center;justify-content:center;border-radius:2px;flex:none}
.opt svg[viewBox="0 0 18 12"],.opt svg[viewBox="0 0 18 10"]{height:12px}
.opt.on{background:#e6e6e6}
.tx-row3{display:flex;align-items:center;height:36px;padding-left:15px;margin-top:3px}
.tx-row3 .v-gap{margin-left:30px}
.help{position:absolute;left:241px;top:207px;width:40px;height:40px;border-radius:50%;background:#1e1e1e;color:#fff;font-size:20px;font-weight:300;line-height:40px;text-align:center}

/* edge sidebar */
.edge-side{width:68px;flex:none;background:#f7f7f7;display:flex;flex-direction:column;align-items:center;padding-top:1px}
.side-i{height:50px;display:flex;align-items:center;justify-content:center}
.side-rule{width:35px;height:1px;background:#bdbdbd;margin-top:16px}
.side-plus{margin-top:31px;color:#222}
.side-rule.bottom{margin-top:auto}
.side-gear{height:56px;display:flex;align-items:center}

/* taskbar */
.taskbar{height:60px;flex:none;background:#e4e6f6;border-top:1px solid #bcbdcc;display:flex;align-items:center;font-family:"Noto Sans","Noto Sans CJK TC",sans-serif;position:relative}
.weather{width:557px;flex:none;display:flex;align-items:center;padding-left:24px}
.weather-icon{width:34px;height:34px;position:relative}
.w-badge{position:absolute;left:14px;top:-8px;width:20px;height:20px;border-radius:50%;background:#c42b1c;color:#fff;font-size:13px;line-height:20px;text-align:center}
.w-text{margin-left:7px;font-size:15px;line-height:20px;color:#1e1e1e;padding-bottom:3px}
.w-sub{color:#555;font-family:"Noto Sans CJK TC",sans-serif;font-size:14.5px}
.winlogo{width:29px;height:30px;flex:none}
.search-pill{width:273px;height:39px;margin-left:18px;background:#f4f5fc;border:1px solid #d6d8e8;border-radius:20px;display:flex;align-items:center;padding-left:13px;gap:13px;font-family:"Noto Sans CJK TC",sans-serif;font-size:17px;color:#555;position:relative;flex:none}
.search-word{padding-bottom:2px}
.bird{position:absolute;left:216px;top:2px;width:46px;height:36px}
.tb-app{width:55.2px;height:49px;display:flex;align-items:center;justify-content:center;position:relative;flex:none;padding-bottom:2px}
.first-app{margin-left:2px}
.on-app::before{content:"";position:absolute;left:4px;right:4px;top:0;bottom:0;background:rgba(255,255,255,.45);border-radius:5px;box-shadow:0 0 1px rgba(0,0,0,.2)}
.on-app svg{position:relative}
.pill-ind{position:absolute;left:17px;top:41px;width:21px;height:5px;border-radius:3px;background:#2a8a96}
.dot-ind{position:absolute;left:25px;top:43px;width:6px;height:6px;border-radius:50%;background:#7a7a7a}
.tray{margin-left:auto;display:flex;align-items:center;padding-right:24px}
.tray-i{display:flex;justify-content:center;align-items:center;flex:none;color:#222}
.w-up{width:30px}
.w-sync{width:52px}
.w-ime{width:26px;font-family:"Noto Sans CJK TC",sans-serif;font-size:18px}
.w-wifi{width:40px;margin-left:8px}
.w-vol{width:20px}
.w-batt{width:40px}
.clock{margin-left:12px;width:72px;font-size:14.5px;line-height:20px;padding-bottom:2px;color:#1e1e1e;white-space:nowrap}
.w-bell{width:22px;margin-left:5px}
```
